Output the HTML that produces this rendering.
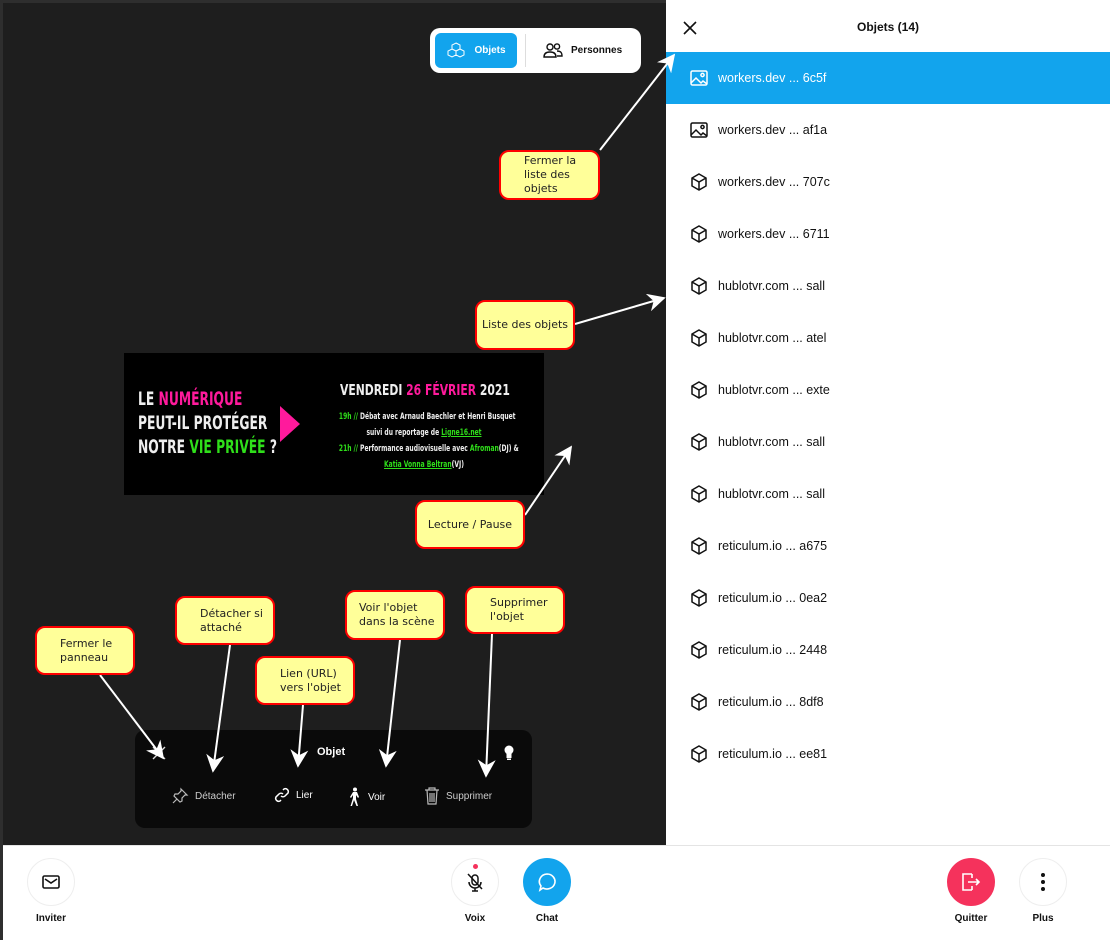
<!DOCTYPE html>
<html><head><meta charset="utf-8"><style>
*{margin:0;padding:0;box-sizing:border-box}
body{width:1110px;height:940px;overflow:hidden;background:#1e1e1e;font-family:"Liberation Sans",sans-serif;position:relative}
.abs{position:absolute}
.note{position:absolute;background:#ffff99;border:2px solid #f00;border-radius:10px;font-size:11px;color:#222;font-family:"DejaVu Sans",sans-serif;line-height:14px;padding:0 0 0 23px;display:flex;align-items:center}
.note.c{justify-content:center;padding:0}
.row{position:absolute;left:666px;width:444px;height:52px;display:flex;align-items:center;padding-left:24px;font-size:12.5px;color:#111}
.row svg{margin-right:10px}
.btn{position:absolute;width:48px;height:48px;border-radius:50%;border:1px solid #eee;display:flex;align-items:center;justify-content:center;background:#fff}
.lbl{position:absolute;width:80px;text-align:center;font-size:10px;font-weight:bold;color:#111;top:913px}
.act{position:absolute;top:787px;font-size:10px;color:#ccc;display:flex;align-items:center;gap:6px}
</style></head><body>
<div class="abs" style="left:0;top:0;width:666px;height:3px;background:#2e2e2e"></div>
<div class="abs" style="left:0;top:0;width:3px;height:940px;background:#2e2e2e"></div>

<!-- toggle -->
<div class="abs" style="left:430px;top:28px;width:211px;height:45px;background:#fff;border-radius:10px"></div>
<div class="abs" style="left:435px;top:33px;width:82px;height:35px;background:#12a4ed;border-radius:6px;display:flex;align-items:center;justify-content:center;gap:8px;color:#fff;font-size:10px;font-weight:bold">
<svg width="20" height="18" viewBox="0 0 20 18" fill="none" stroke="#fff" stroke-width="1"><path d="M10 1l4 2v4l-4 2-4-2V3z M6 7l4 2v4l-4 2-4-2V9z M14 7l4 2v4l-4 2-4-2V9z"/></svg>Objets</div>
<div class="abs" style="left:525px;top:34px;width:1px;height:33px;background:#ddd"></div>
<div class="abs" style="left:543px;top:42px;display:flex;align-items:center;gap:8px;font-size:10px;font-weight:bold;color:#111">
<svg width="20" height="16" viewBox="0 0 20 16" fill="none" stroke="#111" stroke-width="1.4"><circle cx="7" cy="5" r="3"/><circle cx="14" cy="4.5" r="2.6"/><path d="M1 15c0-4 3-5 6-5s6 1 6 5z M14 9c3 0 5 1 5 5h-5"/></svg>Personnes</div>

<!-- video -->
<div class="abs" style="left:124px;top:353px;width:420px;height:142px;background:#000;font-family:'DejaVu Sans Condensed','Liberation Sans Narrow',sans-serif;font-weight:bold;color:#eee">
<div class="abs" style="left:14px;top:34px;font-size:19px;line-height:24px;transform:scaleX(.72);transform-origin:left;white-space:nowrap">LE <span style="color:#ff1a9c">NUMÉRIQUE</span><br>PEUT-IL PROTÉGER<br>NOTRE <span style="color:#2fdf1a">VIE PRIVÉE</span> ?</div>
<div class="abs" style="left:156px;top:53px;width:0;height:0;border-left:20px solid #ff1a9c;border-top:18px solid transparent;border-bottom:18px solid transparent"></div>
<div class="abs" style="left:195px;top:28px;width:210px;text-align:center;font-size:15px;transform:scaleX(.8);white-space:nowrap">VENDREDI <span style="color:#ff1a9c">26 FÉVRIER</span> 2021</div>
<div class="abs" style="left:185px;top:56px;width:230px;text-align:center;font-size:9px;line-height:16px;transform:scaleX(.74);white-space:nowrap"><span style="color:#2fdf1a">19h //</span> Débat avec Arnaud Baechler et Henri Busquet<br>suivi du reportage de <span style="color:#2fdf1a;text-decoration:underline">Ligne16.net</span><br><span style="color:#2fdf1a">21h //</span> Performance audiovisuelle avec <span style="color:#2fdf1a">Afroman</span>(DJ) &amp;<br><span style="color:#2fdf1a;text-decoration:underline">Katia Vonna Beltran</span>(VJ)</div>
</div>

<!-- object panel -->
<div class="abs" style="left:135px;top:730px;width:397px;height:98px;background:#0a0a0a;border-radius:10px"></div>
<div class="abs" style="left:317px;top:746px;color:#fff;font-size:11px;font-weight:bold">Objet</div>
<svg class="abs" style="left:152px;top:746px" width="14" height="14" stroke="#ddd" stroke-width="1.4"><path d="M1 1l12 12M13 1L1 13"/></svg>
<svg class="abs" style="left:503px;top:745px" width="12" height="16" viewBox="0 0 12 16" fill="#fff"><circle cx="6" cy="5" r="4.5"/><rect x="3.5" y="8" width="5" height="5"/><rect x="4" y="13.5" width="4" height="1.5"/></svg>
<div class="act" style="left:171px"><svg width="18" height="18" viewBox="0 0 18 18" fill="none" stroke="#bbb" stroke-width="1.2"><path d="M10 2l6 6-2 0-3 3 0 3-2 1-6-6 1-2 3 0 3-3z M6 12l-4 4"/></svg>Détacher</div>
<div class="act" style="left:274px;color:#fff"><svg width="16" height="16" viewBox="0 0 16 16" fill="none" stroke="#fff" stroke-width="1.5"><path d="M7 9a3 3 0 004 0l3-3a3 3 0 00-4-4l-1 1 M9 7a3 3 0 00-4 0l-3 3a3 3 0 004 4l1-1"/></svg>Lier</div>
<div class="act" style="left:348px;color:#fff"><svg width="14" height="20" viewBox="0 0 14 20" fill="#fff"><circle cx="7" cy="2.5" r="2"/><path d="M5 5h4l2 5-1 1-2-3 0 4 2 7h-1.5L6 13l-2 6H2.5L5 11V8L3 11 2 10z"/></svg>Voir</div>
<div class="act" style="left:424px"><svg width="16" height="18" viewBox="0 0 16 18" fill="none" stroke="#bbb" stroke-width="1.2"><path d="M1 3h14 M5 3V1h6v2 M3 3l1 14h8l1-14 M6 6v9 M8 6v9 M10 6v9"/></svg>Supprimer</div>

<!-- right panel -->
<div class="abs" style="left:666px;top:0;width:444px;height:845px;background:#fff"></div>
<svg class="abs" style="left:683px;top:21px" width="14" height="14" stroke="#111" stroke-width="1.6"><path d="M1 1l12 12M13 1L1 13"/></svg>
<div class="abs" style="left:666px;top:20px;width:444px;text-align:center;font-size:12px;font-weight:bold;color:#111">Objets (14)</div>
<div class="abs" style="left:666px;top:52px;width:444px;height:52px;background:#12a4ed"></div>

<div class="row" style="top:52px;color:#fff"><svg width="18" height="16" viewBox="0 0 18 16" fill="none" stroke="#fff" stroke-width="1.5"><rect x="1" y="1" width="16" height="14" rx="1.5"/><circle cx="12.5" cy="5" r="1.6"/><path d="M1 13l5-5 5 5 2-2 4 3"/></svg>workers.dev ... 6c5f</div>
<div class="row" style="top:104px"><svg width="18" height="16" viewBox="0 0 18 16" fill="none" stroke="#111" stroke-width="1.5"><rect x="1" y="1" width="16" height="14" rx="1.5"/><circle cx="12.5" cy="5" r="1.6"/><path d="M1 13l5-5 5 5 2-2 4 3"/></svg>workers.dev ... af1a</div>
<div class="row" style="top:156px"><svg width="18" height="18" viewBox="0 0 18 18" fill="none" stroke="#111" stroke-width="1.5"><path d="M9 1l7 4v8l-7 4-7-4V5z M2 5l7 4 7-4 M9 9v8"/></svg>workers.dev ... 707c</div>
<div class="row" style="top:208px"><svg width="18" height="18" viewBox="0 0 18 18" fill="none" stroke="#111" stroke-width="1.5"><path d="M9 1l7 4v8l-7 4-7-4V5z M2 5l7 4 7-4 M9 9v8"/></svg>workers.dev ... 6711</div>
<div class="row" style="top:260px"><svg width="18" height="18" viewBox="0 0 18 18" fill="none" stroke="#111" stroke-width="1.5"><path d="M9 1l7 4v8l-7 4-7-4V5z M2 5l7 4 7-4 M9 9v8"/></svg>hublotvr.com ... sall</div>
<div class="row" style="top:312px"><svg width="18" height="18" viewBox="0 0 18 18" fill="none" stroke="#111" stroke-width="1.5"><path d="M9 1l7 4v8l-7 4-7-4V5z M2 5l7 4 7-4 M9 9v8"/></svg>hublotvr.com ... atel</div>
<div class="row" style="top:364px"><svg width="18" height="18" viewBox="0 0 18 18" fill="none" stroke="#111" stroke-width="1.5"><path d="M9 1l7 4v8l-7 4-7-4V5z M2 5l7 4 7-4 M9 9v8"/></svg>hublotvr.com ... exte</div>
<div class="row" style="top:416px"><svg width="18" height="18" viewBox="0 0 18 18" fill="none" stroke="#111" stroke-width="1.5"><path d="M9 1l7 4v8l-7 4-7-4V5z M2 5l7 4 7-4 M9 9v8"/></svg>hublotvr.com ... sall</div>
<div class="row" style="top:468px"><svg width="18" height="18" viewBox="0 0 18 18" fill="none" stroke="#111" stroke-width="1.5"><path d="M9 1l7 4v8l-7 4-7-4V5z M2 5l7 4 7-4 M9 9v8"/></svg>hublotvr.com ... sall</div>
<div class="row" style="top:520px"><svg width="18" height="18" viewBox="0 0 18 18" fill="none" stroke="#111" stroke-width="1.5"><path d="M9 1l7 4v8l-7 4-7-4V5z M2 5l7 4 7-4 M9 9v8"/></svg>reticulum.io ... a675</div>
<div class="row" style="top:572px"><svg width="18" height="18" viewBox="0 0 18 18" fill="none" stroke="#111" stroke-width="1.5"><path d="M9 1l7 4v8l-7 4-7-4V5z M2 5l7 4 7-4 M9 9v8"/></svg>reticulum.io ... 0ea2</div>
<div class="row" style="top:624px"><svg width="18" height="18" viewBox="0 0 18 18" fill="none" stroke="#111" stroke-width="1.5"><path d="M9 1l7 4v8l-7 4-7-4V5z M2 5l7 4 7-4 M9 9v8"/></svg>reticulum.io ... 2448</div>
<div class="row" style="top:676px"><svg width="18" height="18" viewBox="0 0 18 18" fill="none" stroke="#111" stroke-width="1.5"><path d="M9 1l7 4v8l-7 4-7-4V5z M2 5l7 4 7-4 M9 9v8"/></svg>reticulum.io ... 8df8</div>
<div class="row" style="top:728px"><svg width="18" height="18" viewBox="0 0 18 18" fill="none" stroke="#111" stroke-width="1.5"><path d="M9 1l7 4v8l-7 4-7-4V5z M2 5l7 4 7-4 M9 9v8"/></svg>reticulum.io ... ee81</div>

<!-- bottom bar -->
<div class="abs" style="left:0;top:845px;width:1110px;height:95px;background:#fff;border-top:1px solid #e4e4e4"></div>
<div class="abs" style="left:0;top:845px;width:3px;height:95px;background:#2e2e2e"></div>
<div class="btn" style="left:27px;top:858px"><svg width="18" height="14" viewBox="0 0 18 14" fill="none" stroke="#111" stroke-width="1.6"><rect x="1" y="1" width="16" height="12" rx="1.5"/><path d="M3 4l6 4 6-4"/></svg></div>
<div class="lbl" style="left:11px">Inviter</div>
<div class="btn" style="left:451px;top:858px"><svg width="18" height="22" viewBox="0 0 18 22" fill="none" stroke="#111" stroke-width="1.5"><rect x="6" y="4" width="6" height="10" rx="3"/><path d="M3 11a6 6 0 0012 0 M9 17v3 M6 20h6 M2 3l14 15"/></svg></div>
<div class="abs" style="left:473px;top:864px;width:5px;height:5px;border-radius:50%;background:#f5325c"></div>
<div class="lbl" style="left:435px">Voix</div>
<div class="btn" style="left:523px;top:858px;background:#12a4ed;border-color:#12a4ed"><svg width="20" height="20" viewBox="0 0 20 20" fill="none" stroke="#fff" stroke-width="1.6"><path d="M10 2a8 7.5 0 11-4 14l-3 2 1-4A8 7.5 0 0110 2z"/></svg></div>
<div class="lbl" style="left:507px">Chat</div>
<div class="btn" style="left:947px;top:858px;background:#f5325c;border-color:#f5325c"><svg width="20" height="18" viewBox="0 0 20 18" fill="none" stroke="#fff" stroke-width="1.6"><path d="M11 1H2v16h9 M11 5V1 M11 13v4 M7 9h11 M15 6l3 3-3 3"/></svg></div>
<div class="lbl" style="left:931px">Quitter</div>
<div class="btn" style="left:1019px;top:858px"><svg width="6" height="20"><circle cx="3" cy="3" r="2" fill="#111"/><circle cx="3" cy="10" r="2" fill="#111"/><circle cx="3" cy="17" r="2" fill="#111"/></svg></div>
<div class="lbl" style="left:1003px">Plus</div>

<!-- arrows -->
<svg class="abs" style="left:0;top:0" width="1110" height="940">
<defs><marker id="a" viewBox="0 0 10 10" refX="9" refY="5" markerWidth="9" markerHeight="9" orient="auto"><path d="M0 0L10 5 0 10 3 5z" fill="#fff"/></marker></defs>
<g stroke="#fff" stroke-width="2" marker-end="url(#a)">
<line x1="600" y1="150" x2="674" y2="55"/>
<line x1="575" y1="324" x2="664" y2="298"/>
<line x1="525" y1="515" x2="571" y2="447"/>
<line x1="100" y1="675" x2="163" y2="758"/>
<line x1="230" y1="645" x2="213" y2="771"/>
<line x1="303" y1="705" x2="298" y2="766"/>
<line x1="400" y1="640" x2="386" y2="766"/>
<line x1="492" y1="634" x2="486" y2="776"/>
</g></svg>

<!-- notes -->
<div class="note" style="left:499px;top:150px;width:101px;height:50px">Fermer la<br>liste des<br>objets</div>
<div class="note c" style="left:475px;top:300px;width:100px;height:50px">Liste des objets</div>
<div class="note c" style="left:415px;top:500px;width:110px;height:49px">Lecture / Pause</div>
<div class="note" style="left:35px;top:626px;width:100px;height:49px">Fermer le<br>panneau</div>
<div class="note" style="left:175px;top:596px;width:100px;height:49px">Détacher si<br>attaché</div>
<div class="note" style="left:255px;top:656px;width:100px;height:49px">Lien (URL)<br>vers l'objet</div>
<div class="note c" style="left:345px;top:590px;width:100px;height:50px;justify-content:flex-start;padding-left:12px">Voir l'objet<br>dans la scène</div>
<div class="note" style="left:465px;top:586px;width:100px;height:48px">Supprimer<br>l'objet</div>
</body></html>
